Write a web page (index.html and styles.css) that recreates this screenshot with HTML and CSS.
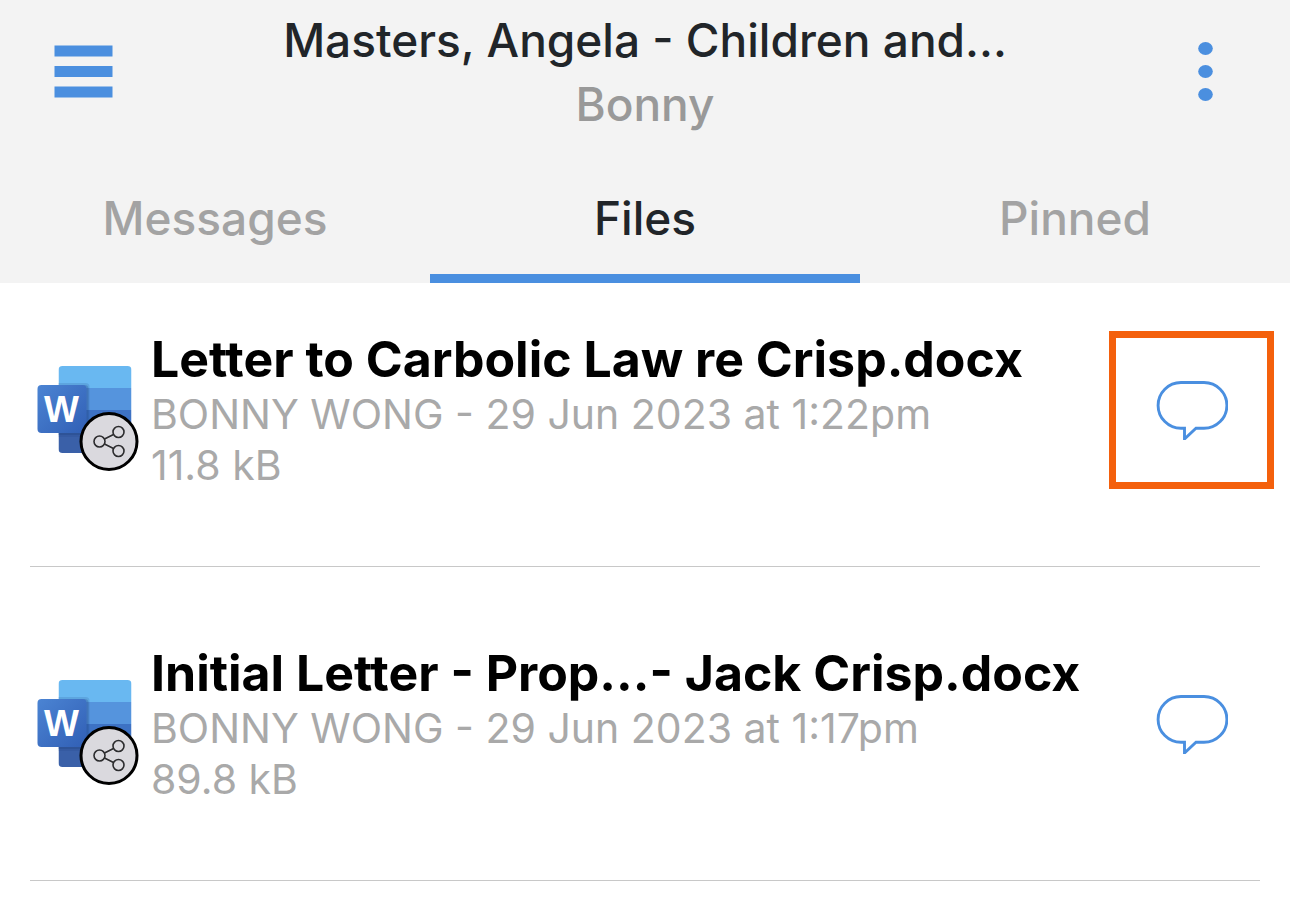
FILE: index.html
```html
<!DOCTYPE html>
<html lang="en">
<head>
    <meta charset="UTF-8">
    <meta name="viewport" content="width=device-width, initial-scale=1.0">
    <title>Files</title>
    <link rel="stylesheet" href="styles.css">
</head>
<body>
    <!-- Shared icons -->
    <svg class="sprite" aria-hidden="true">
        <defs>
            <linearGradient id="tile" x1="0" y1="0" x2="1" y2="1">
                <stop offset="0" stop-color="#4b84d3"/>
                <stop offset="1" stop-color="#315fb5"/>
            </linearGradient>
            <clipPath id="sheet"><rect x="28" y="37" width="73" height="87" rx="4"/></clipPath>
        </defs>
        <symbol id="icon-word" viewBox="0 0 120 162">
            <g clip-path="url(#sheet)">
                <rect x="28" y="37" width="73" height="22" fill="#69b8f1"/>
                <rect x="28" y="59" width="73" height="22" fill="#5594dd"/>
                <rect x="28" y="81" width="73" height="22" fill="#3d72c4"/>
                <rect x="28" y="103" width="73" height="21" fill="#3a60a8"/>
                <rect x="24" y="54" width="35" height="54" rx="4" fill="#1d3f7c" opacity="0.15"/>
                <rect x="24" y="56" width="34" height="50" rx="4" fill="#1d3f7c" opacity="0.25"/>
            </g>
            <rect x="7" y="56" width="49" height="48" rx="4" fill="url(#tile)"/>
            <circle cx="78.5" cy="112.500" r="28" fill="#dad9de" stroke="#000" stroke-width="3"/>
            <g fill="none" stroke="#2c2c2e" stroke-width="1.6">
                <circle cx="69" cy="112.500" r="5.500"/>
                <circle cx="88" cy="103" r="5.500"/>
                <circle cx="88" cy="122" r="5.500"/>
                <path d="M74 110l9-4.500M74 115l9 4.500"/>
            </g>
        </symbol>
        <symbol id="icon-comment" viewBox="0 0 72 60">
            <path d="M28 48.300H25a22.900 22.900 0 0 1 0-45.800h23a22.900 22.900 0 0 1 0 45.800H40L28.500 59V46.800" fill="none" stroke="#4a8fe0" stroke-width="2.900"/>
        </symbol>
    </svg>

    <header class="header">
        <div class="topbar">
            <button type="button" class="icon-button" aria-label="Menu">
                <svg width="60" height="54" viewBox="0 0 60 54" fill="#4b8fdf">
                    <rect x="0.500" y="0.500" width="58" height="11"/>
                    <rect x="0.500" y="21" width="58" height="11"/>
                    <rect x="0.500" y="41.500" width="58" height="11"/>
                </svg>
            </button>
            <div class="heading">
                <h1>Masters, Angela - Children and...</h1>
                <p>Bonny</p>
            </div>
            <button type="button" class="icon-button" aria-label="More options">
                <svg width="60" height="60" viewBox="0 0 60 60" fill="#4b8fdf">
                    <ellipse cx="29.500" cy="6.500" rx="7.300" ry="6.500"/>
                    <ellipse cx="29.500" cy="29.500" rx="7.300" ry="6.500"/>
                    <ellipse cx="29.500" cy="52.500" rx="7.300" ry="6.500"/>
                </svg>
            </button>
        </div>
        <nav class="tabs">
            <a href="#messages">Messages</a>
            <a href="#files" class="active" aria-current="page">Files</a>
            <a href="#pinned">Pinned</a>
        </nav>
    </header>

    <main>
        <ul class="files">
            <li class="file">
                <svg class="file-icon" viewBox="0 0 120 162">
                    <use href="#icon-word"/>
                    <text x="31" y="93" text-anchor="middle">W</text>
                </svg>
                <div class="file-info">
                    <h2>Letter to Carbolic Law re Crisp.docx</h2>
                    <p>BONNY WONG - 29 Jun 2023 at 1:22pm</p>
                    <p>11.8 kB</p>
                </div>
                <button type="button" class="comment highlighted" aria-label="Comment">
                    <svg width="72" height="60"><use href="#icon-comment"/></svg>
                </button>
            </li>
            <li class="file">
                <svg class="file-icon" viewBox="0 0 120 162">
                    <use href="#icon-word"/>
                    <text x="31" y="93" text-anchor="middle">W</text>
                </svg>
                <div class="file-info">
                    <h2>Initial Letter - Prop...- Jack Crisp.docx</h2>
                    <p>BONNY WONG - 29 Jun 2023 at 1:17pm</p>
                    <p>89.8 kB</p>
                </div>
                <button type="button" class="comment" aria-label="Comment">
                    <svg width="72" height="60"><use href="#icon-comment"/></svg>
                </button>
            </li>
        </ul>
    </main>
</body>
</html>
```
FILE: styles.css
```css
* {
    box-sizing: border-box;
}
body {
    margin: 0;
    background: #fff;
    color: #000;
    font-family: Inter, "Liberation Sans", sans-serif;
}
h1, h2, p, ul {
    margin: 0;
    padding: 0;
}
button {
    background: none;
    border: none;
    padding: 0;
    cursor: pointer;
}
svg {
    display: block;
}
.sprite {
    position: absolute;
    width: 0;
    height: 0;
}
.header {
    background: #f3f3f3;
}
.topbar {
    display: flex;
    justify-content: space-between;
    align-items: center;
    padding: 8px 54px;
}
.heading {
    flex: 1;
    min-width: 0;
    text-align: center;
}
.heading h1, .heading p {
    font-size: 46px;
    line-height: 64px;
    font-weight: 500;
    white-space: nowrap;
}
.heading h1 {
    color: #212529;
}
.heading p {
    color: #999;
}
.tabs {
    display: grid;
    grid-template-columns: repeat(3, 1fr);
}
.tabs a {
    padding: 42px 0 24px;
    border-bottom: 9px solid transparent;
    color: #a3a3a3;
    font-size: 46px;
    line-height: 64px;
    font-weight: 500;
    text-align: center;
    text-decoration: none;
}
.tabs a.active {
    color: #212529;
    border-bottom-color: #4a8fe0;
}
.files {
    padding: 0 30px;
    list-style: none;
}
.file {
    display: flex;
    align-items: center;
    padding: 76px 0 75px;
    border-bottom: 1px solid #c8c8c8;
}
.file:first-child {
    padding-top: 46px;
}
.file-icon {
    flex: none;
    width: 121px;
    height: 162px;
}
.file-icon text {
    fill: #fff;
    font-family: "Liberation Sans", sans-serif;
    font-size: 37px;
    font-weight: 700;
}
.file-info {
    flex: 1;
    min-width: 0;
    white-space: nowrap;
}
.file-info h2 {
    font-size: 50px;
    line-height: 60px;
    font-weight: 700;
}
.file-info p {
    color: #a9a9a9;
    font-size: 41px;
    line-height: 51px;
}
.comment {
    display: flex;
    justify-content: center;
    align-items: center;
    flex: none;
    width: 165px;
    height: 158px;
    margin-right: -14px;
    border: 7px solid transparent;
}
.comment.highlighted {
    border-color: #f4600c;
}
```
